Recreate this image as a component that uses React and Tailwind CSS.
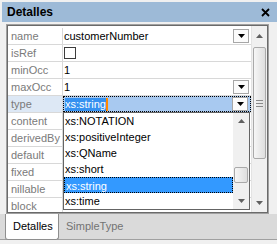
import React from "react";

const rows = [
  { label: "name", value: "customerNumber", combo: true },
  { label: "isRef", check: true },
  { label: "minOcc", value: "1" },
  { label: "maxOcc", value: "1", combo: true },
  { label: "type", value: "xs:string", combo: true, active: true },
  { label: "content" },
  { label: "derivedBy" },
  { label: "default" },
  { label: "fixed" },
  { label: "nillable" },
  { label: "block" },
];

const options = ["xs:NOTATION", "xs:positiveInteger", "xs:QName", "xs:short", "xs:string", "xs:time"];

function Tri({ down, color = "#000" }) {
  return (
    <svg width="7" height="4" viewBox="0 0 7 4">
      <path d={down ? "M0 0H7L3.5 4Z" : "M0 4H7L3.5 0Z"} fill={color} />
    </svg>
  );
}

function ComboButton() {
  return (
    <div className="mr-[2px] flex h-[14px] w-[16px] items-center justify-center border border-[#a7a7a7] bg-[#fbfbfb]">
      <Tri down />
    </div>
  );
}

function Thumb({ className, children }) {
  return (
    <div className={"rounded-[2px] border border-[#a9a9a9] bg-gradient-to-r from-[#f6f6f6] to-[#dedede] " + className}>
      {children}
    </div>
  );
}

export default function App() {
  return (
    <div className="relative h-[244px] w-[277px] overflow-hidden bg-[#f0f0f0] font-['Liberation_Sans',Arial,sans-serif] text-[11px] text-black">
      {/* title */}
      <div className="ml-[2px] mt-[2px] flex h-[20px] items-center justify-between bg-[#9dbad7] pl-[5px] pr-[7px]">
        <span className="text-[12px] font-bold">Detalles</span>
        <svg width="9" height="9" viewBox="0 0 9 9">
          <path d="M1 1L8 8M8 1L1 8" stroke="#000" strokeWidth="1.8" />
        </svg>
      </div>

      {/* body */}
      <div className="ml-[6px] mt-[2px] h-[190px] w-[263px] border border-[#a0a0a0]">
        <div className="flex h-full border border-[#6a6a6a] bg-white">
          <div className="relative w-[243px] overflow-hidden pt-[1px]">
            {rows.map((r) => (
              <div key={r.label} className="flex h-[17px] border-t border-[#d8d8d8] first:border-t-0 first:pt-[1px]">
                <div
                  className={
                    "w-[55px] border-r border-[#d8d8d8] pl-[3px] leading-[16px] text-[#7a7a7a] " +
                    (r.active ? "bg-[#dde8f5]" : "")
                  }
                >
                  {r.label}
                </div>
                <div
                  className={
                    "flex flex-1 items-center justify-between pl-[1px] leading-[16px] " +
                    (r.active ? "border border-dotted border-black bg-[#a8c9f0] pl-0" : "")
                  }
                >
                  {r.check ? (
                    <div className="h-[12px] w-[12px] border border-[#3c3c3c] bg-white" />
                  ) : r.active ? (
                    <span className="flex items-center">
                      <span className="bg-[#3591f0] leading-[13px] text-white">{r.value}</span>
                      <span className="h-[13px] w-[2px] bg-[#ff8a00]" />
                    </span>
                  ) : (
                    <span>{r.value}</span>
                  )}
                  {r.combo && <ComboButton />}
                </div>
              </div>
            ))}

            {/* open combo list */}
            <div className="absolute left-[55px] top-[86px] flex h-[98px] w-[187px] border border-[#646464] bg-white">
              <div className="flex-1">
                {options.map((o) => (
                  <div
                    key={o}
                    className={
                      "h-[16px] pl-[1px] leading-[16px] " +
                      (o === "xs:string" ? "border border-dotted border-black bg-[#3399ff] pl-0 leading-[14px] text-white" : "")
                    }
                  >
                    {o}
                  </div>
                ))}
              </div>
              <div className="flex w-[16px] flex-col bg-[#f0f0f0]">
                <div className="flex h-[16px] items-center justify-center">
                  <Tri color="#606060" />
                </div>
                <div className="flex-1 px-[1px] pt-[38px]">
                  <Thumb className="h-[16px]" />
                </div>
                <div className="flex h-[16px] items-center justify-center">
                  <Tri down color="#606060" />
                </div>
              </div>
            </div>
          </div>

          {/* main scrollbar */}
          <div className="flex w-[16px] flex-col border-l border-[#e3e3e3] bg-[#f0f0f0]">
            <div className="flex h-[20px] items-center justify-center">
              <Tri color="#606060" />
            </div>
            <div className="px-[1px] pt-[1px]">
              <Thumb className="flex h-[112px] flex-col items-center justify-center gap-[2px]">
                <div className="h-px w-[7px] bg-[#8a8a8a]" />
                <div className="h-px w-[7px] bg-[#8a8a8a]" />
                <div className="h-px w-[7px] bg-[#8a8a8a]" />
              </Thumb>
            </div>
            <div className="flex-1" />
            <div className="flex h-[18px] items-center justify-center">
              <Tri down color="#606060" />
            </div>
          </div>
        </div>
      </div>

      {/* tabs */}
      <div className="flex h-[26px] border-b border-[#a0a0a0] bg-[#dadada] pl-[5px]">
        <div className="h-[26px] w-[54px] rounded-b-[3px] border border-t-0 border-[#8e8e8e] bg-white pl-[7px] leading-[24px]">
          Detalles
        </div>
        <div className="pl-[7px] leading-[24px] text-[#737373]">SimpleType</div>
      </div>
    </div>
  );
}
